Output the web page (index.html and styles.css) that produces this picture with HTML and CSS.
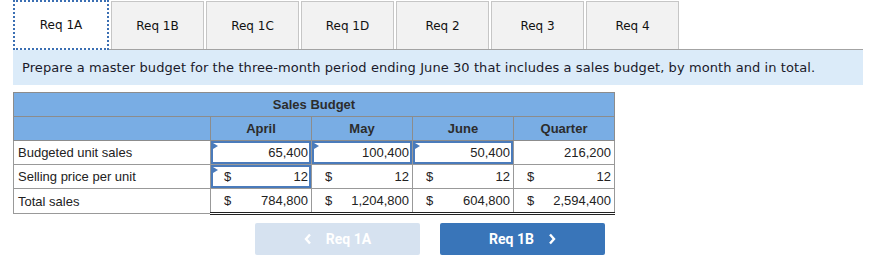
FILE: index.html
```html
<!DOCTYPE html>
<html lang="en">
<head>
    <meta charset="UTF-8">
    <title>Sales Budget</title>
    <link rel="stylesheet" href="styles.css">
</head>
<body>
    <div class="page">
        <div class="tabs">
            <div class="tab active">Req 1A</div>
            <div class="tab">Req 1B</div>
            <div class="tab">Req 1C</div>
            <div class="tab">Req 1D</div>
            <div class="tab">Req 2</div>
            <div class="tab">Req 3</div>
            <div class="tab">Req 4</div>
        </div>
        <div class="prompt">Prepare a master budget for the three-month period ending June 30 that includes a sales budget, by month and in total.</div>

        <table class="budget">
            <colgroup>
                <col class="col-label">
                <col class="col-num">
                <col class="col-num">
                <col class="col-num">
                <col class="col-num">
            </colgroup>
            <tr class="head">
                <th colspan="5">Sales Budget</th>
            </tr>
            <tr class="head">
                <th></th>
                <th>April</th>
                <th>May</th>
                <th>June</th>
                <th>Quarter</th>
            </tr>
            <tr>
                <td class="label">Budgeted unit sales</td>
                <td><div class="val input"><span></span><span>65,400</span></div></td>
                <td><div class="val input"><span></span><span>100,400</span></div></td>
                <td><div class="val input"><span></span><span>50,400</span></div></td>
                <td><div class="val"><span></span><span>216,200</span></div></td>
            </tr>
            <tr>
                <td class="label">Selling price per unit</td>
                <td><div class="val input"><span>$</span><span>12</span></div></td>
                <td><div class="val"><span>$</span><span>12</span></div></td>
                <td><div class="val"><span>$</span><span>12</span></div></td>
                <td><div class="val"><span>$</span><span>12</span></div></td>
            </tr>
            <tr class="total">
                <td class="label">Total sales</td>
                <td><div class="val"><span>$</span><span>784,800</span></div></td>
                <td><div class="val"><span>$</span><span>1,204,800</span></div></td>
                <td><div class="val"><span>$</span><span>604,800</span></div></td>
                <td><div class="val"><span>$</span><span>2,594,400</span></div></td>
            </tr>
        </table>

        <div class="nav">
            <button class="nav-button prev">
                <svg width="8" height="12" viewBox="0 0 8 12"><polyline points="6,1.5 2,6 6,10.5" fill="none" stroke="#fff" stroke-width="2.4"/></svg>
                <span>Req 1A</span>
            </button>
            <button class="nav-button next">
                <span>Req 1B</span>
                <svg width="8" height="12" viewBox="0 0 8 12"><polyline points="2,1.5 6,6 2,10.5" fill="none" stroke="#fff" stroke-width="2.4"/></svg>
            </button>
        </div>
    </div>
</body>
</html>
```

FILE: styles.css
```css
body {
    margin: 0;
    background-color: #fff;
}
.page {
    padding: 1px 0 0 13px;
}
.tabs {
    display: flex;
    gap: 2px;
    position: relative;
    z-index: 1;
    margin-bottom: -1px;
}
.tab {
    width: 91px;
    height: 47px;
    border: 1px solid #c6c6c6;
    border-bottom: none;
    background-color: #f2f2f2;
    font-family: "DejaVu Sans", Verdana, sans-serif;
    font-size: 12px;
    color: #111;
    display: flex;
    align-items: center;
    justify-content: center;
}
.tab.active {
    width: 92px;
    height: 46px;
    margin-top: -1px;
    background-color: #fff;
    border: 2px dotted #3b6fb3;
}
.prompt {
    width: 841px;
    height: 35px;
    padding-left: 9px;
    border-top: 1px solid #a3a3a3;
    background-color: #dbebf9;
    font-family: "DejaVu Sans", Verdana, sans-serif;
    font-size: 13px;
    letter-spacing: 0.08px;
    color: #1a1a2a;
    display: flex;
    align-items: center;
}
.budget {
    margin-top: 7px;
    border-collapse: collapse;
    table-layout: fixed;
    width: 601px;
    font-family: "Liberation Sans", Arial, sans-serif;
    font-size: 13px;
    color: #222;
}
.col-label {
    width: 197px;
}
.col-num {
    width: 101px;
}
.budget th,
.budget td {
    height: 23px;
    padding: 0;
    border: 1px solid #999;
}
.head th {
    background-color: #79ade4;
    border-color: #8c8c8c;
    font-weight: bold;
    color: #2c2c2c;
    text-align: center;
}
.budget td.label {
    padding-left: 4px;
    text-align: left;
}
.val {
    display: flex;
    justify-content: space-between;
    align-items: center;
    height: 23px;
    padding: 0 3px 0 13px;
    box-sizing: border-box;
}
.val.input {
    position: relative;
    border: 2px solid #4a7bbb;
    padding: 0 1px 0 11px;
}
.val.input::before {
    content: "";
    position: absolute;
    left: 0;
    top: 0;
    border-left: 5px solid #4a7bbb;
    border-top: 3px solid transparent;
    border-bottom: 3px solid transparent;
}
.total td:not(.label) {
    border-top: 1px solid #222;
    border-bottom: 3px double #222;
}
.nav {
    display: flex;
    gap: 20px;
    margin: 8px 0 0 242px;
}
.nav-button {
    width: 165px;
    height: 32px;
    border: none;
    border-radius: 2px;
    color: #fff;
    font-family: Roboto, "Liberation Sans", sans-serif;
    font-weight: bold;
    font-size: 14px;
    display: flex;
    align-items: center;
    justify-content: center;
    gap: 14px;
}
.nav-button.prev {
    background-color: #d6e2f0;
}
.nav-button.next {
    background-color: #3975b9;
}
```
